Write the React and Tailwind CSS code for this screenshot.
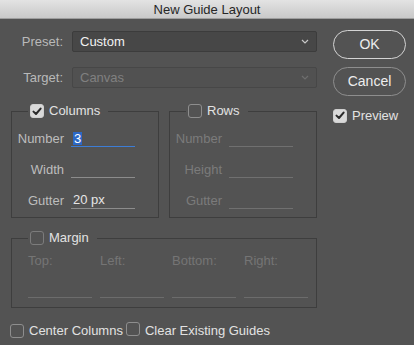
import React from "react";

const Check = ({ checked, dim }) => (
  <span
    className={`inline-flex h-[14px] w-[14px] shrink-0 items-center justify-center rounded-[3px] border ${
      checked
        ? "border-[#cfcfcf] bg-[#d9d9d9]"
        : dim
        ? "border-[#7c7c7c]"
        : "border-[#8e8e8e]"
    }`}
  >
    {checked && (
      <svg width="10" height="9" viewBox="0 0 10 9">
        <path
          d="M1.5 4.6 L4 7 L8.6 1.6"
          fill="none"
          stroke="#2a2a2a"
          strokeWidth="2"
          strokeLinecap="round"
          strokeLinejoin="round"
        />
      </svg>
    )}
  </span>
);

const Chevron = ({ color }) => (
  <svg width="8" height="5" viewBox="0 0 8 5">
    <path d="M1 1 L4 4 L7 1" fill="none" stroke={color} strokeWidth="1.2" />
  </svg>
);

const Field = ({ label, value, active, disabled }) => (
  <div className="flex h-[18px] items-center">
    <span
      className={`w-[56px] pr-[4px] text-right ${
        disabled ? "text-[#7b7b7b]" : "text-[#bdbdbd]"
      }`}
    >
      {label}
    </span>
    <div
      className={`ml-[3px] flex h-[18px] w-[64px] items-end border-b pb-[1px] pl-[2px] ${
        active
          ? "border-[#3d7dd6]"
          : disabled
          ? "border-[#707070]"
          : "border-[#8c8c8c]"
      }`}
    >
      {value === "3" ? (
        <span className="bg-[#2c68c6] px-[1px] leading-[13px] text-white">3</span>
      ) : (
        <span className="leading-[14px] text-[#e6e6e6]">{value}</span>
      )}
    </div>
  </div>
);

const Legend = ({ label, checked, dim }) => (
  <legend className="ml-[16px] flex items-center gap-[5px] pl-[2px] pr-[8px]">
    <Check checked={checked} dim={dim} />
    <span className="leading-[14px] text-[#e2e2e2]">{label}</span>
  </legend>
);

export default function App() {
  return (
    <div
      className="h-[345px] w-[414px] overflow-hidden bg-[#535353] text-[13px] leading-[15px]"
      style={{ fontFamily: '"Liberation Sans", Arial, sans-serif' }}
    >
      <div className="flex h-[19px] items-center justify-center border-b border-[#9e9e9e] bg-gradient-to-b from-[#e3e3e3] to-[#c9c9c9] text-[#262626]">
        New Guide Layout
      </div>

      <div className="flex">
        <div className="w-[317px] pl-[11px]">
          <div className="mt-[12px] flex items-center">
            <span className="w-[56px] pr-[4px] text-right text-[#b9b9b9]">Preset:</span>
            <div className="ml-[5px] flex h-[21px] w-[245px] items-center justify-between rounded-[2px] border border-[#3c3c3c] bg-[#474747] pl-[7px] pr-[7px]">
              <span className="text-[#f2f2f2]">Custom</span>
              <Chevron color="#c8c8c8" />
            </div>
          </div>

          <div className="mt-[15px] flex items-center">
            <span className="w-[56px] pr-[4px] text-right text-[#b9b9b9]">Target:</span>
            <div className="ml-[5px] flex h-[21px] w-[245px] items-center justify-between rounded-[2px] border border-[#474747] bg-[#515151] pl-[7px] pr-[7px]">
              <span className="text-[#808080]">Canvas</span>
              <Chevron color="#6e6e6e" />
            </div>
          </div>

          <div className="mt-[16px] flex gap-[10px]">
            <fieldset className="h-[114px] w-[148px] border border-[#3e3e3e]">
              <Legend label="Columns" checked />
              <div className="flex flex-col gap-[13px] pt-[11px]">
                <Field label="Number" value="3" active />
                <Field label="Width" value="" />
                <Field label="Gutter" value="20 px" />
              </div>
            </fieldset>
            <fieldset className="h-[114px] w-[148px] border border-[#3e3e3e]">
              <Legend label="Rows" />
              <div className="flex flex-col gap-[13px] pt-[11px]">
                <Field label="Number" value="" disabled />
                <Field label="Height" value="" disabled />
                <Field label="Gutter" value="" disabled />
              </div>
            </fieldset>
          </div>

          <fieldset className="mt-[13px] h-[77px] w-[306px] border border-[#3e3e3e]">
            <Legend label="Margin" dim />
            <div className="flex gap-[8px] pl-[16px] pt-[8px]">
              {["Top:", "Left:", "Bottom:", "Right:"].map((l) => (
                <div key={l} className="flex w-[64px] flex-col">
                  <span className="text-[#757575]">{l}</span>
                  <div className="mt-[29px] border-b border-[#6c6c6c]" />
                </div>
              ))}
            </div>
          </fieldset>

          <div className="mt-[14px] -ml-[1px] flex items-center">
            <Check />
            <span className="ml-[5px] text-[#e2e2e2]">Center Columns</span>
            <span className="ml-[3px]">
              <Check />
            </span>
            <span className="ml-[5px] text-[#e2e2e2]">Clear Existing Guides</span>
          </div>
        </div>

        <div className="ml-[16px] flex flex-col pt-[11px]">
          <button className="h-[29px] w-[73px] rounded-full border border-[#d4d4d4] text-[14px] text-[#ededed]">
            OK
          </button>
          <button className="mt-[8px] h-[29px] w-[73px] rounded-full border border-[#8e8e8e] text-[14px] text-[#ededed]">
            Cancel
          </button>
          <div className="mt-[12px] flex items-center">
            <Check checked />
            <span className="ml-[5px] text-[#e2e2e2]">Preview</span>
          </div>
        </div>
      </div>
    </div>
  );
}
